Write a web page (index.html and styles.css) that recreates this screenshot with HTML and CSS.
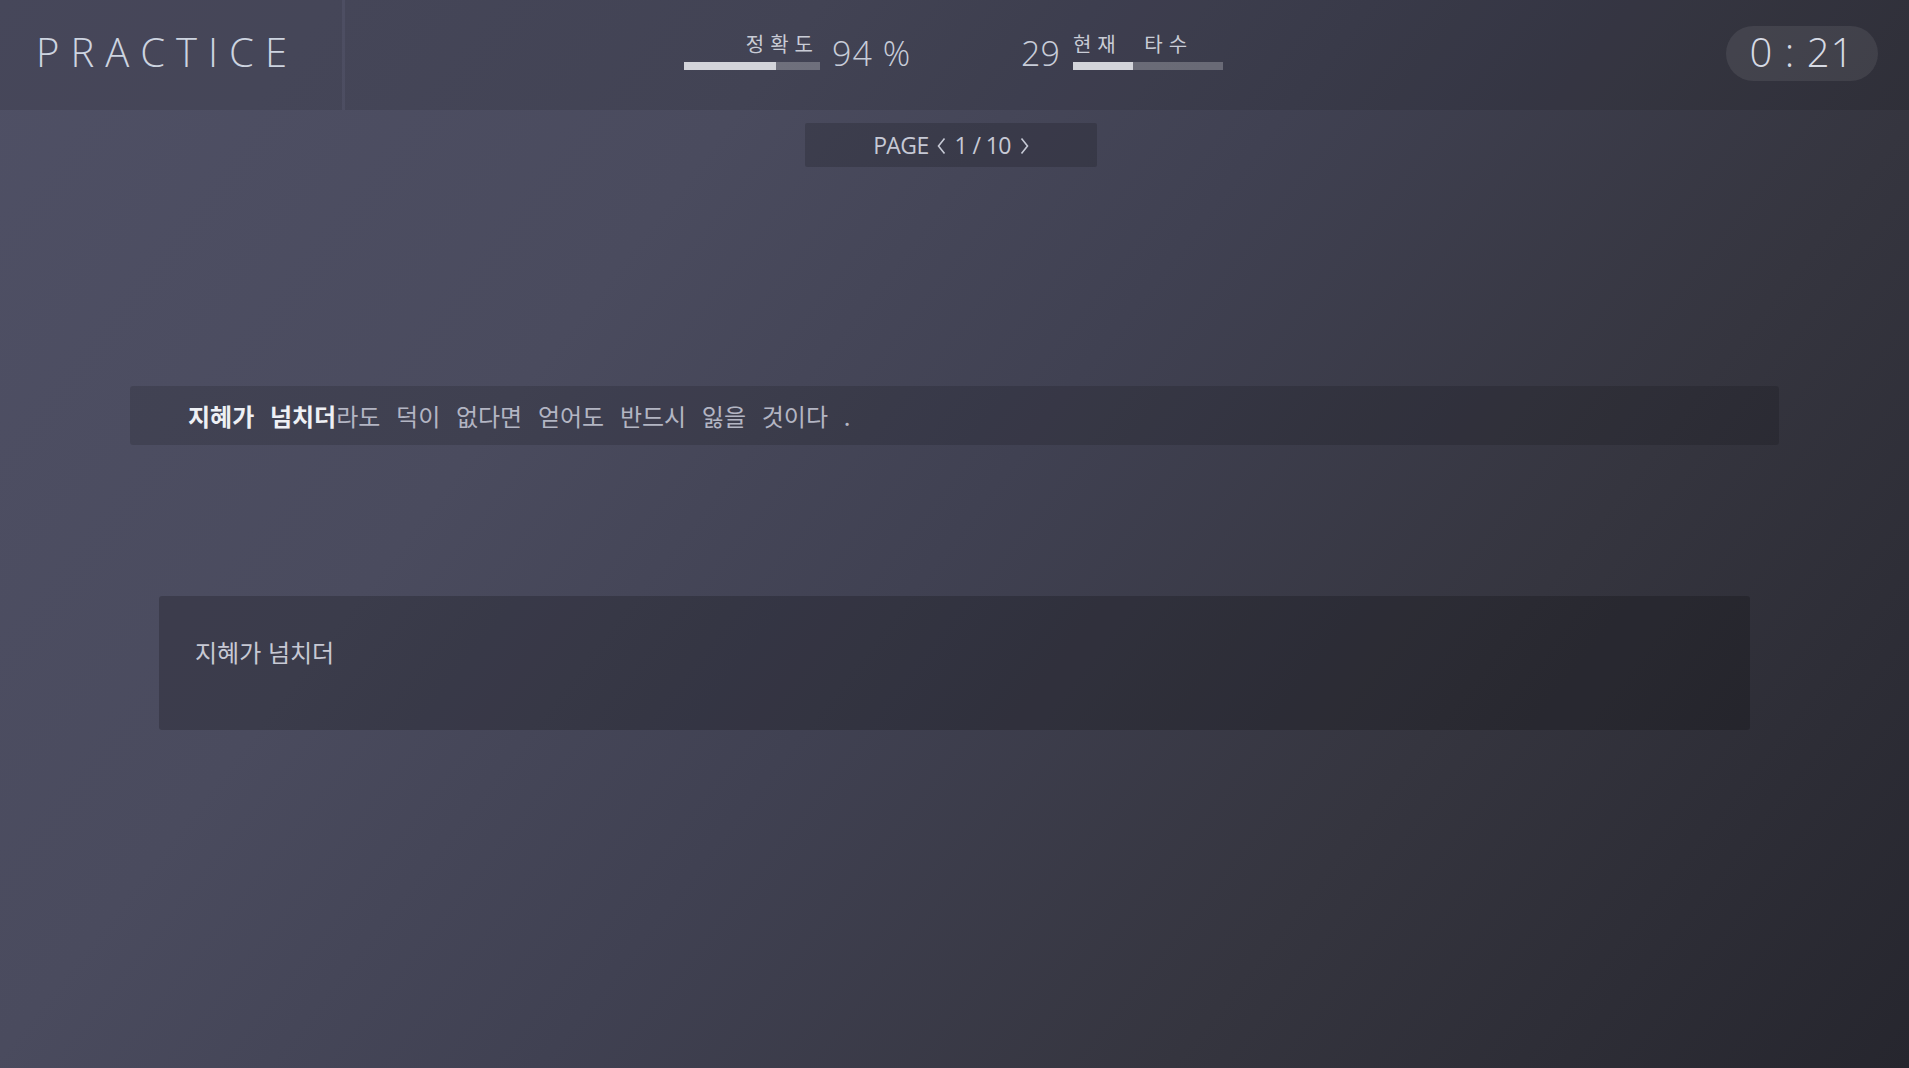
FILE: index.html
```html
<!DOCTYPE html>
<html lang="ko">
<head>
<meta charset="utf-8">
<title>Practice</title>
<link rel="stylesheet" href="styles.css">
</head>
<body>
<div class="app">
  <header class="topbar">
    <div class="brand">PRACTICE</div>
    <div class="hud">
      <div class="stats">
        <div class="stat stat-left">
          <div class="stat-label">정확도</div>
          <div class="bar"><div class="bar-fill" style="width:68%"></div></div>
        </div>
        <div class="stat-value value-acc">94 %</div>
        <div class="stat-value value-speed">29</div>
        <div class="stat stat-right">
          <div class="stat-label">현재 타수</div>
          <div class="bar"><div class="bar-fill" style="width:40%"></div></div>
        </div>
      </div>
      <div class="timer">0 : 21</div>
    </div>
  </header>

  <main class="content">
    <div class="pager">
      <span class="pager-word">PAGE</span>
      <svg class="chev" viewBox="0 0 9 18" width="9" height="18"><polyline points="7.5,1.5 1.5,9 7.5,16.5" fill="none" stroke="currentColor" stroke-width="1.6"/></svg>
      <span class="pager-num">1 / 10</span>
      <svg class="chev" viewBox="0 0 9 18" width="9" height="18"><polyline points="1.5,1.5 7.5,9 1.5,16.5" fill="none" stroke="currentColor" stroke-width="1.6"/></svg>
    </div>

    <div class="sentence">
      <span class="typed">지혜가 넘치더</span><span class="rest">라도 덕이 없다면 얻어도 반드시 잃을 것이다 .</span>
    </div>

    <div class="input-box">
      <span class="input-text">지혜가 넘치더</span>
    </div>
  </main>
</div>
</body>
</html>
```

FILE: styles.css
```css
html, body {
  margin: 0;
  padding: 0;
  height: 100%;
}

body {
  background: linear-gradient(128deg, #4f5065 0%, #4a4b5e 30%, #404152 50%, #35353f 73%, #26262e 100%);
  font-family: "Open Sans", "Noto Sans CJK KR", sans-serif;
  color: #c8ccd8;
  overflow: hidden;
}

.app {
  height: 100vh;
  display: flex;
  flex-direction: column;
}

/* ---------- top bar ---------- */
.topbar {
  display: flex;
  gap: 3px;
  height: 110px;
  flex: none;
}

.brand {
  width: 306px;
  padding-left: 36px;
  background: rgba(0, 0, 0, 0.1);
  display: flex;
  align-items: center;
  font-family: "Open Sans", sans-serif;
  font-weight: 300;
  font-size: 40px;
  letter-spacing: 11px;
  color: #cdd4e0;
  padding-bottom: 7px;
  box-sizing: content-box;
}

.hud {
  flex: 1;
  background: rgba(0, 0, 0, 0.1);
  display: flex;
  align-items: flex-start;
  padding: 0 31px 0 339px;
}

.stats {
  display: flex;
  align-items: flex-end;
  margin-top: 32px;
}

.stat {
  display: flex;
  flex-direction: column;
}

.stat-left {
  width: 136px;
}

.stat-right {
  width: 150px;
  margin-left: 13px;
}

.stat-label {
  font-family: "Noto Sans CJK KR", sans-serif;
  font-size: 20px;
  line-height: 24px;
  letter-spacing: 6px;
  word-spacing: 11px;
  color: #c9ccd6;
  white-space: nowrap;
}

.stat-left .stat-label {
  text-align: right;
  padding-right: 1px;
}

.bar {
  height: 8px;
  margin-top: 6px;
  background: rgba(255, 255, 255, 0.24);
}

.bar-fill {
  height: 100%;
  background: #d3d4da;
}

.stat-value {
  font-family: "Open Sans", sans-serif;
  font-weight: 300;
  font-size: 34px;
  line-height: 33px;
  color: #c8cdd9;
  white-space: nowrap;
}

.value-acc {
  margin-left: 12px;
  letter-spacing: 1px;
}

.value-speed {
  margin-left: 110px;
}

.timer {
  margin-left: auto;
  margin-top: 26px;
  width: 152px;
  height: 55px;
  border-radius: 28px;
  background: rgba(255, 255, 255, 0.08);
  display: flex;
  align-items: center;
  justify-content: center;
  font-family: "Open Sans", sans-serif;
  font-weight: 300;
  font-size: 40px;
  letter-spacing: 1px;
  color: #d6dae4;
  padding-bottom: 4px;
  box-sizing: border-box;
  white-space: pre;
}

/* ---------- content ---------- */
.content {
  display: flex;
  flex-direction: column;
  align-items: center;
}

.pager {
  margin-top: 13px;
  width: 292px;
  height: 44px;
  margin-left: -7px;
  background: rgba(0, 0, 0, 0.16);
  border-radius: 2px;
  display: flex;
  align-items: center;
  justify-content: center;
  gap: 8px;
  font-family: "Open Sans", sans-serif;
  font-size: 23px;
  letter-spacing: -0.6px;
  color: #c6c9d5;
}

.chev {
  color: #c6c9d5;
  margin-top: 1px;
}

.pager-num {
  margin: 0 1px;
}

.sentence {
  margin-top: 219px;
  width: 1649px;
  height: 59px;
  box-sizing: border-box;
  padding-left: 58px;
  background: rgba(0, 0, 0, 0.14);
  border-radius: 3px;
  display: flex;
  align-items: center;
  font-family: "Noto Sans CJK KR", sans-serif;
  font-size: 24px;
  letter-spacing: 0;
  word-spacing: 9px;
  white-space: pre;
}

.typed {
  color: #eef0f5;
  font-weight: 700;
}

.rest {
  color: #b3b5c3;
}

.input-box {
  margin-top: 151px;
  width: 1591px;
  height: 134px;
  box-sizing: border-box;
  padding: 41px 0 0 36px;
  background: rgba(0, 0, 0, 0.2);
  border-radius: 3px;
}

.input-text {
  font-family: "Noto Sans CJK KR", sans-serif;
  font-size: 24px;
  line-height: 30px;
  letter-spacing: 0;
  color: #c7c9d4;
}
```
